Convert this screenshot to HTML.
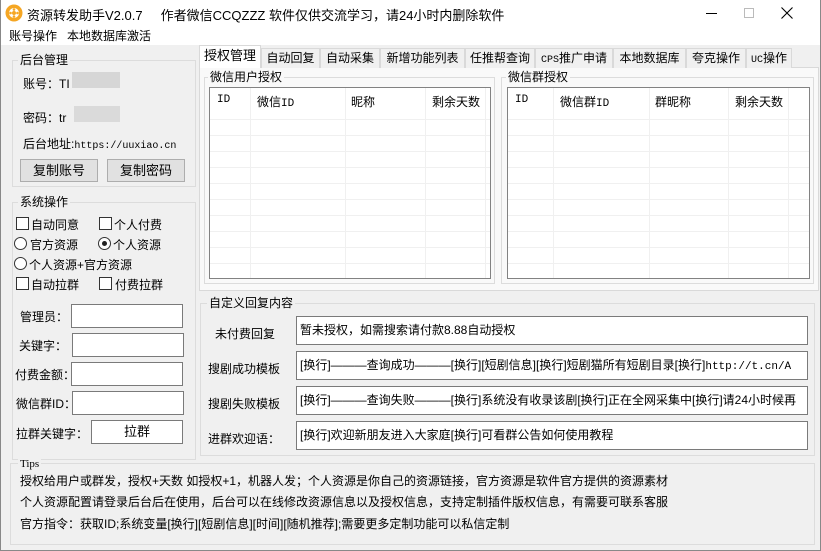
<!DOCTYPE html>
<html><head><meta charset="utf-8"><style>
*{margin:0;padding:0;box-sizing:border-box}
body{width:821px;height:551px;background:#f0f0f0;font-family:"Liberation Sans","Noto Sans CJK SC",sans-serif;font-size:12px;color:#000;position:relative;overflow:hidden}
.a{position:absolute;white-space:nowrap}
.grp{position:absolute;border:1px solid #dcdcdc}
.gl{position:absolute;background:#f0f0f0;padding:0 2px;font-size:12px;line-height:14px;white-space:nowrap}
.btn{position:absolute;background:#e1e1e1;border:1px solid #adadad;text-align:center;font-size:13px}
.inp{position:absolute;background:#fff;border:1px solid #7a7a7a}
.cb{position:absolute;width:13px;height:13px;border:1px solid #333;background:#fff}
.rd{position:absolute;width:13px;height:13px;border:1px solid #333;border-radius:50%;background:#fff}
.tab{position:absolute;top:48px;height:20px;border:1px solid #d9d9d9;border-bottom:none;background:#f0f0f0;text-align:center;line-height:18px;font-size:12px;white-space:nowrap;overflow:hidden}
.tbl{position:absolute;background:#fff;border:1px solid #828282;
 background-image:linear-gradient(#fff 0 25px,transparent 25px),repeating-linear-gradient(#fff 0 15px,#f0f0f0 15px 16px)}
.vl{position:absolute;width:1px;background:#f0f0f0}
.tx{position:absolute;background:#fff;border:1px solid #7a7a7a;font-size:12px;line-height:27px;padding-left:3px;overflow:hidden;white-space:nowrap}
.lbl{position:absolute;font-size:12px}
</style></head><body>
<div class="a" style="left:0;top:0;width:821px;height:28px;background:#fff"></div>
<div class="a" style="left:0;top:28px;width:821px;height:17px;background:#fff"></div>
<div class="a" style="left:0;top:0;width:821px;height:551px;border:1px solid #888;border-top:none"></div>
<svg class="a" style="left:5px;top:4px" width="18" height="18" viewBox="0 0 18 18"><circle cx="9" cy="9" r="8.5" fill="#f5a623"/><circle cx="9" cy="9" r="5" fill="#fff"/><circle cx="9" cy="9" r="2" fill="#f5a623"/><circle cx="9" cy="5.5" r="1.3" fill="#f5a623"/><circle cx="9" cy="12.5" r="1.3" fill="#f5a623"/><circle cx="5.5" cy="9" r="1.3" fill="#f5a623"/><circle cx="12.5" cy="9" r="1.3" fill="#f5a623"/></svg>
<div class="a" style="left:27px;top:5px;font-size:13px">资源转发助手V2.0.7&nbsp;&nbsp;&nbsp;&nbsp;&nbsp;作者微信CCQZZZ 软件仅供交流学习，请24小时内删除软件</div>
<div class="a" style="left:706px;top:13px;width:11px;height:1px;background:#000"></div>
<div class="a" style="left:744px;top:8px;width:10px;height:10px;border:1px solid #bbb"></div>
<svg class="a" style="left:781px;top:7px" width="12" height="12"><path d="M0.5 0.5L11.5 11.5M11.5 0.5L0.5 11.5" stroke="#000" stroke-width="1.1"/></svg>
<div class="a" style="left:9px;top:28px;font-size:12px;line-height:16px">账号操作&nbsp;&nbsp;&nbsp;本地数据库激活</div>

<div class="grp" style="left:12px;top:60px;width:184px;height:127px"></div>
<div class="gl" style="left:18px;top:53px">后台管理</div>
<div class="a" style="left:23px;top:75px">账号：TI</div>
<div class="a" style="left:72px;top:72px;width:48px;height:16px;background:#d6d6d6"></div>
<div class="a" style="left:23px;top:109px">密码：tr</div>
<div class="a" style="left:74px;top:106px;width:46px;height:16px;background:#dadada"></div>
<div class="a" style="left:23px;top:135px">后台地址:<span style="font-family:'Liberation Mono',monospace;font-size:10px">https://uuxiao.cn</span></div>
<div class="btn" style="left:20px;top:159px;width:78px;height:23px;line-height:21px">复制账号</div>
<div class="btn" style="left:107px;top:159px;width:78px;height:23px;line-height:21px">复制密码</div>

<div class="grp" style="left:12px;top:202px;width:184px;height:258px"></div>
<div class="gl" style="left:18px;top:195px">系统操作</div>
<div class="cb" style="left:16px;top:217px"></div><div class="a lbl" style="left:31px;top:216px">自动同意</div>
<div class="cb" style="left:99px;top:217px"></div><div class="a lbl" style="left:114px;top:216px">个人付费</div>
<div class="rd" style="left:14px;top:237px"></div><div class="a lbl" style="left:30px;top:236px">官方资源</div>
<div class="rd" style="left:98px;top:237px"></div><div class="a" style="left:102px;top:241px;width:5px;height:5px;border-radius:50%;background:#222"></div><div class="a lbl" style="left:113px;top:236px">个人资源</div>
<div class="rd" style="left:14px;top:257px"></div><div class="a lbl" style="left:29px;top:256px">个人资源+官方资源</div>
<div class="cb" style="left:16px;top:277px"></div><div class="a lbl" style="left:31px;top:276px">自动拉群</div>
<div class="cb" style="left:99px;top:277px"></div><div class="a lbl" style="left:115px;top:276px">付费拉群</div>
<div class="a lbl" style="left:20px;top:308px">管理员：</div><div class="inp" style="left:71px;top:304px;width:112px;height:24px"></div>
<div class="a lbl" style="left:19px;top:337px">关键字：</div><div class="inp" style="left:72px;top:333px;width:112px;height:24px"></div>
<div class="a lbl" style="left:15px;top:366px">付费金额：</div><div class="inp" style="left:71px;top:362px;width:112px;height:24px"></div>
<div class="a lbl" style="left:16px;top:395px">微信群ID：</div><div class="inp" style="left:72px;top:391px;width:112px;height:24px"></div>
<div class="a lbl" style="left:16px;top:425px">拉群关键字：</div><div class="inp" style="left:91px;top:420px;width:92px;height:24px;text-align:center;font-size:13px;line-height:22px">拉群</div>

<div class="a" style="left:199px;top:67px;width:620px;height:224px;border:1px solid #d9d9d9;background:#f9f9f9"></div>
<div class="tab" style="left:199px;top:45px;width:62px;height:23px;background:#fff;line-height:20px;font-size:13px;z-index:2">授权管理</div>
<div class="tab" style="left:261px;width:59px">自动回复</div>
<div class="tab" style="left:320px;width:60px">自动采集</div>
<div class="tab" style="left:380px;width:85px">新增功能列表</div>
<div class="tab" style="left:465px;width:70px">任推帮查询</div>
<div class="tab" style="left:535px;width:78px"><span style="font-family:'Liberation Mono',monospace;font-size:10px">CPS</span>推广申请</div>
<div class="tab" style="left:613px;width:73px">本地数据库</div>
<div class="tab" style="left:686px;width:60px">夸克操作</div>
<div class="tab" style="left:746px;width:46px"><span style="font-family:'Liberation Mono',monospace;font-size:10px">UC</span>操作</div>

<div class="grp" style="left:204px;top:77px;width:291px;height:207px"></div>
<div class="gl" style="left:208px;top:70px;background:#f9f9f9">微信用户授权</div>
<div class="tbl" style="left:209px;top:87px;width:282px;height:192px"></div>
<div class="vl" style="left:250px;top:88px;height:190px"></div><div class="vl" style="left:345px;top:88px;height:190px"></div><div class="vl" style="left:425px;top:88px;height:190px"></div><div class="vl" style="left:485px;top:88px;height:190px"></div>
<div class="a" style="left:217px;top:94px;font-size:11px;font-family:'Liberation Mono',monospace">ID</div>
<div class="a" style="left:257px;top:93px">微信<span style="font-family:'Liberation Mono',monospace;font-size:11px">ID</span></div>
<div class="a" style="left:351px;top:93px">昵称</div>
<div class="a" style="left:432px;top:93px">剩余天数</div>

<div class="grp" style="left:501px;top:77px;width:313px;height:207px"></div>
<div class="gl" style="left:506px;top:70px;background:#f9f9f9">微信群授权</div>
<div class="tbl" style="left:507px;top:87px;width:303px;height:192px"></div>
<div class="vl" style="left:553px;top:88px;height:190px"></div><div class="vl" style="left:649px;top:88px;height:190px"></div><div class="vl" style="left:728px;top:88px;height:190px"></div><div class="vl" style="left:788px;top:88px;height:190px"></div>
<div class="a" style="left:515px;top:94px;font-size:11px;font-family:'Liberation Mono',monospace">ID</div>
<div class="a" style="left:560px;top:93px">微信群<span style="font-family:'Liberation Mono',monospace;font-size:11px">ID</span></div>
<div class="a" style="left:655px;top:93px">群昵称</div>
<div class="a" style="left:735px;top:93px">剩余天数</div>

<div class="grp" style="left:200px;top:303px;width:615px;height:153px"></div>
<div class="gl" style="left:207px;top:296px">自定义回复内容</div>
<div class="a lbl" style="left:215px;top:325px">未付费回复</div>
<div class="tx" style="left:296px;top:316px;width:512px;height:29px">暂未授权，如需搜索请付款8.88自动授权</div>
<div class="a lbl" style="left:208px;top:360px">搜剧成功模板</div>
<div class="tx" style="left:296px;top:351px;width:512px;height:29px">[换行]———查询成功———[换行][短剧信息][换行]短剧猫所有短剧目录[换行]<span style="font-family:'Liberation Mono',monospace;font-size:11px">http://t.cn/A</span></div>
<div class="a lbl" style="left:208px;top:395px">搜剧失败模板</div>
<div class="tx" style="left:296px;top:386px;width:512px;height:29px">[换行]———查询失败———[换行]系统没有收录该剧[换行]正在全网采集中[换行]请24小时候再</div>
<div class="a lbl" style="left:208px;top:430px">进群欢迎语：</div>
<div class="tx" style="left:296px;top:421px;width:512px;height:29px">[换行]欢迎新朋友进入大家庭[换行]可看群公告如何使用教程</div>

<div class="grp" style="left:10px;top:463px;width:805px;height:82px"></div>
<div class="gl" style="left:18px;top:457px;font-family:'Liberation Serif',serif;font-size:11px">Tips</div>
<div class="a" style="left:20px;top:472px">授权给用户或群发，授权+天数 如授权+1，机器人发；个人资源是你自己的资源链接，官方资源是软件官方提供的资源素材</div>
<div class="a" style="left:20px;top:493px">个人资源配置请登录后台后在使用，后台可以在线修改资源信息以及授权信息，支持定制插件版权信息，有需要可联系客服</div>
<div class="a" style="left:20px;top:515px">官方指令：获取ID;系统变量[换行][短剧信息][时间][随机推荐];需要更多定制功能可以私信定制</div>
</body></html>
